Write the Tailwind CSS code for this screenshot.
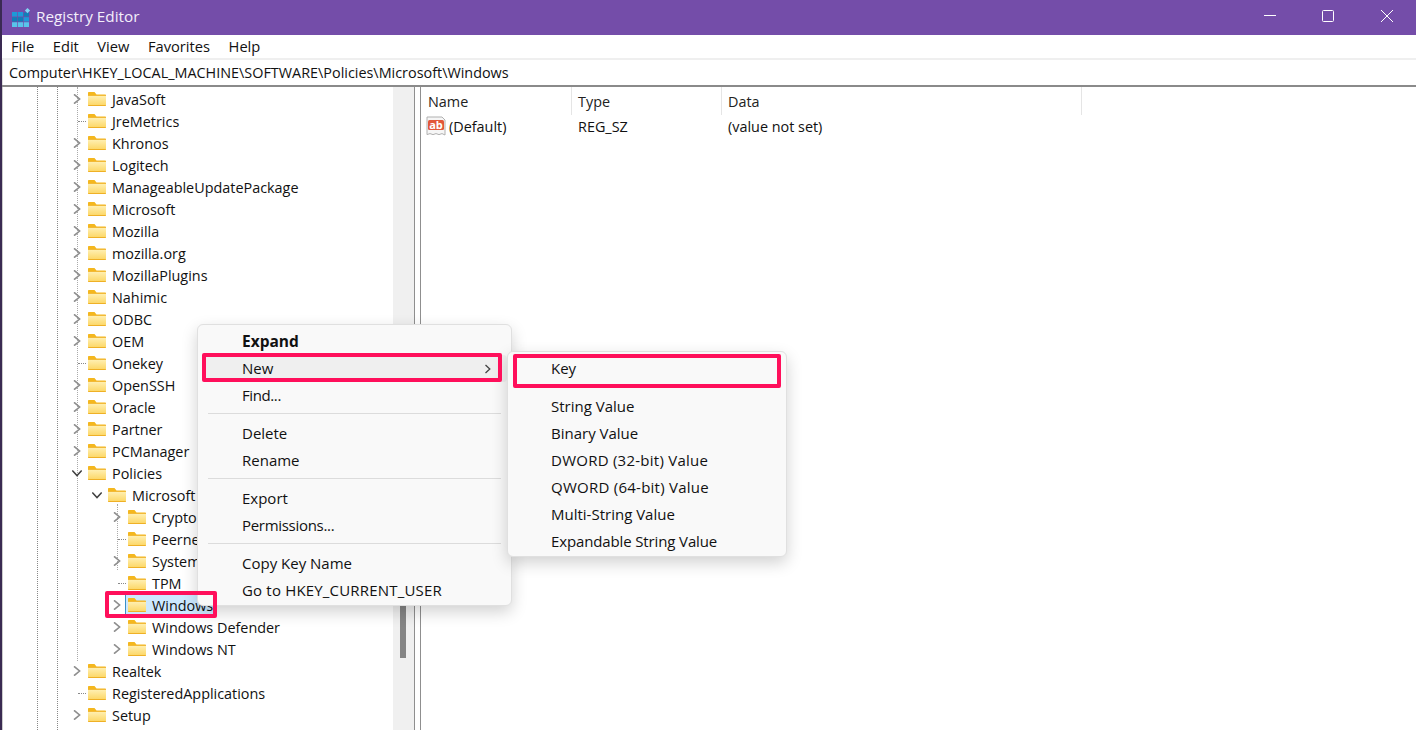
<!DOCTYPE html>
<html lang="en">
<head>
    <meta charset="UTF-8">
    <title>Registry Editor</title>
    <script src="https://cdn.jsdelivr.net/npm/@tailwindcss/browser@4"></script>
</head>
<body class="w-[1416px] h-[730px] overflow-hidden bg-white text-[#111] text-[14.4px] font-['Open_Sans','Noto_Sans',sans-serif]">
    <svg class="absolute w-0 h-0">
        <defs>
            <linearGradient id="fold" x1="0" y1="0" x2="0" y2="1">
                <stop offset="0" stop-color="#fff0b4"/>
                <stop offset="1" stop-color="#fcd662"/>
            </linearGradient>
        </defs>
        <symbol id="folder" viewBox="0 0 18 14">
            <path d="M0 1C0 .4.4 0 1 0h5.5l2 2.5H17c.6 0 1 .4 1 1V4H0z" fill="#f4b71e"/>
            <path d="M0 3.5h18V13c0 .6-.4 1-1 1H1c-.6 0-1-.4-1-1z" fill="url(#fold)"/>
            <path d="M0 3.2h18v.8H0zM0 13h18v.2c0 .5-.4.8-1 .8H1c-.6 0-1-.3-1-.8z" fill="#efb026"/>
        </symbol>
        <symbol id="right" viewBox="0 0 10 10"><path d="M2 .3L7.6 5 2 9.7" fill="none" stroke="#8e8e8e" stroke-width="1.6"/></symbol>
        <symbol id="down" viewBox="0 0 10 10"><path d="M.3 2.5L5 7.6l4.7-5.1" fill="none" stroke="#404040" stroke-width="1.5"/></symbol>
        <symbol id="more" viewBox="0 0 10 10"><path d="M2.5 1L6.8 5 2.5 9" fill="none" stroke="#444" stroke-width="1.3"/></symbol>
    </svg>

    <div class="relative flex flex-col h-full border-l-2 border-l-[#3a2a52]">
        <!-- Title bar -->
        <header class="h-[35px] shrink-0 flex items-center bg-[#744da9] text-[#f3eefa] pl-[9px] pr-[6px]">
            <svg class="w-[20px] h-[20px] shrink-0" viewBox="0 0 20 20">
                <path d="M1 4h5v4.5H1zM6.7 4H12v4.5H6.7z" fill="#1c9ad8"/>
                <path d="M1 9.2h5v4.3H1zM6.7 9.2H12v4.3H6.7zM12.7 4.5H18v4H12.7z" fill="#0f7fb8"/>
                <path d="M12.7 9.2H18v4.3h-5.3z" fill="#1c9ad8"/>
                <path d="M1 14.2h5V19H1zM6.7 14.2H12V19H6.7zM12.7 14.2H18V19h-5.3z" fill="#58c4ea"/>
                <path d="M16.5 0l2.6 2.6-2.6 2.6-2.6-2.6z" fill="#7fd4f2"/>
            </svg>
            <span class="ml-[5px] -mt-[2px] text-[15.3px]">Registry Editor</span>
            <div class="ml-auto flex items-center mb-[3px]">
                <svg class="w-[46px] h-[16px] mr-[12px]" viewBox="0 0 46 16"><path d="M17 7.5h12" stroke="#fff" stroke-width="1"/></svg>
                <svg class="w-[46px] h-[16px] mr-[13px]" viewBox="0 0 46 16"><rect x="17.5" y="2.5" width="11" height="11" rx="1" fill="none" stroke="#fff"/></svg>
                <svg class="w-[46px] h-[16px]" viewBox="0 0 46 16"><path d="M17 2l12 12M29 2L17 14" stroke="#fff" fill="none"/></svg>
            </div>
        </header>

        <!-- Menu bar -->
        <nav class="h-[23px] shrink-0 flex items-center gap-[18.5px] pl-[9px] text-[14.7px]">
            <span>File</span><span>Edit</span><span>View</span><span>Favorites</span><span>Help</span>
        </nav>
        <div class="h-[2px] shrink-0 bg-[#efefef]"></div>

        <!-- Address bar -->
        <div class="h-[25px] shrink-0 flex items-center pl-[6px] border-l border-l-[#ddd]">Computer\HKEY_LOCAL_MACHINE\SOFTWARE\Policies\Microsoft\Windows</div>
        <div class="h-[2px] shrink-0 bg-[#8a8a8a]"></div>

        <div class="flex flex-1 min-h-0">
            <!-- Tree -->
            <div class="relative w-[391px] shrink-0 overflow-hidden border-l border-l-[#ccc]">
                <div class="absolute left-[34px] top-0 bottom-0 border-l border-dotted border-[#888]"></div>
                <div class="absolute left-[54px] top-0 bottom-0 border-l border-dotted border-[#888]"></div>
                <div class="absolute left-[74px] top-0 h-[574px] border-l border-dotted border-[#aaa]"></div>
                <div class="absolute left-[114px] top-[417px] h-[66px] border-l border-dotted border-[#aaa]"></div>
                <div class="pt-px relative [&_span]:pt-[2px]">
                    <div class="flex items-center h-[22px] pl-[85px]"><svg class="absolute left-[69px] w-[10px] h-[10px]"><use href="#right"/></svg><svg class="w-[18px] h-[14px]"><use href="#folder"/></svg><span class="ml-[6px]">JavaSoft</span></div>
                    <div class="flex items-center h-[22px] pl-[85px]"><div class="absolute left-[75px] w-[8px] border-t border-dotted border-[#888]"></div><svg class="w-[18px] h-[14px]"><use href="#folder"/></svg><span class="ml-[6px]">JreMetrics</span></div>
                    <div class="flex items-center h-[22px] pl-[85px]"><svg class="absolute left-[69px] w-[10px] h-[10px]"><use href="#right"/></svg><svg class="w-[18px] h-[14px]"><use href="#folder"/></svg><span class="ml-[6px]">Khronos</span></div>
                    <div class="flex items-center h-[22px] pl-[85px]"><svg class="absolute left-[69px] w-[10px] h-[10px]"><use href="#right"/></svg><svg class="w-[18px] h-[14px]"><use href="#folder"/></svg><span class="ml-[6px]">Logitech</span></div>
                    <div class="flex items-center h-[22px] pl-[85px]"><svg class="absolute left-[69px] w-[10px] h-[10px]"><use href="#right"/></svg><svg class="w-[18px] h-[14px]"><use href="#folder"/></svg><span class="ml-[6px]">ManageableUpdatePackage</span></div>
                    <div class="flex items-center h-[22px] pl-[85px]"><svg class="absolute left-[69px] w-[10px] h-[10px]"><use href="#right"/></svg><svg class="w-[18px] h-[14px]"><use href="#folder"/></svg><span class="ml-[6px]">Microsoft</span></div>
                    <div class="flex items-center h-[22px] pl-[85px]"><svg class="absolute left-[69px] w-[10px] h-[10px]"><use href="#right"/></svg><svg class="w-[18px] h-[14px]"><use href="#folder"/></svg><span class="ml-[6px]">Mozilla</span></div>
                    <div class="flex items-center h-[22px] pl-[85px]"><svg class="absolute left-[69px] w-[10px] h-[10px]"><use href="#right"/></svg><svg class="w-[18px] h-[14px]"><use href="#folder"/></svg><span class="ml-[6px]">mozilla.org</span></div>
                    <div class="flex items-center h-[22px] pl-[85px]"><svg class="absolute left-[69px] w-[10px] h-[10px]"><use href="#right"/></svg><svg class="w-[18px] h-[14px]"><use href="#folder"/></svg><span class="ml-[6px]">MozillaPlugins</span></div>
                    <div class="flex items-center h-[22px] pl-[85px]"><svg class="absolute left-[69px] w-[10px] h-[10px]"><use href="#right"/></svg><svg class="w-[18px] h-[14px]"><use href="#folder"/></svg><span class="ml-[6px]">Nahimic</span></div>
                    <div class="flex items-center h-[22px] pl-[85px]"><svg class="absolute left-[69px] w-[10px] h-[10px]"><use href="#right"/></svg><svg class="w-[18px] h-[14px]"><use href="#folder"/></svg><span class="ml-[6px]">ODBC</span></div>
                    <div class="flex items-center h-[22px] pl-[85px]"><svg class="absolute left-[69px] w-[10px] h-[10px]"><use href="#right"/></svg><svg class="w-[18px] h-[14px]"><use href="#folder"/></svg><span class="ml-[6px]">OEM</span></div>
                    <div class="flex items-center h-[22px] pl-[85px]"><div class="absolute left-[75px] w-[8px] border-t border-dotted border-[#888]"></div><svg class="w-[18px] h-[14px]"><use href="#folder"/></svg><span class="ml-[6px]">Onekey</span></div>
                    <div class="flex items-center h-[22px] pl-[85px]"><svg class="absolute left-[69px] w-[10px] h-[10px]"><use href="#right"/></svg><svg class="w-[18px] h-[14px]"><use href="#folder"/></svg><span class="ml-[6px]">OpenSSH</span></div>
                    <div class="flex items-center h-[22px] pl-[85px]"><svg class="absolute left-[69px] w-[10px] h-[10px]"><use href="#right"/></svg><svg class="w-[18px] h-[14px]"><use href="#folder"/></svg><span class="ml-[6px]">Oracle</span></div>
                    <div class="flex items-center h-[22px] pl-[85px]"><svg class="absolute left-[69px] w-[10px] h-[10px]"><use href="#right"/></svg><svg class="w-[18px] h-[14px]"><use href="#folder"/></svg><span class="ml-[6px]">Partner</span></div>
                    <div class="flex items-center h-[22px] pl-[85px]"><svg class="absolute left-[69px] w-[10px] h-[10px]"><use href="#right"/></svg><svg class="w-[18px] h-[14px]"><use href="#folder"/></svg><span class="ml-[6px]">PCManager</span></div>
                    <div class="flex items-center h-[22px] pl-[85px]"><svg class="absolute left-[69px] w-[10px] h-[10px]"><use href="#down"/></svg><svg class="w-[18px] h-[14px]"><use href="#folder"/></svg><span class="ml-[6px]">Policies</span></div>
                    <div class="flex items-center h-[22px] pl-[105px]"><svg class="absolute left-[89px] w-[10px] h-[10px]"><use href="#down"/></svg><svg class="w-[18px] h-[14px]"><use href="#folder"/></svg><span class="ml-[6px]">Microsoft</span></div>
                    <div class="flex items-center h-[22px] pl-[125px]"><svg class="absolute left-[109px] w-[10px] h-[10px]"><use href="#right"/></svg><svg class="w-[18px] h-[14px]"><use href="#folder"/></svg><span class="ml-[6px]">Crypto</span></div>
                    <div class="flex items-center h-[22px] pl-[125px]"><div class="absolute left-[115px] w-[8px] border-t border-dotted border-[#888]"></div><svg class="w-[18px] h-[14px]"><use href="#folder"/></svg><span class="ml-[6px]">Peerne</span></div>
                    <div class="flex items-center h-[22px] pl-[125px]"><svg class="absolute left-[109px] w-[10px] h-[10px]"><use href="#right"/></svg><svg class="w-[18px] h-[14px]"><use href="#folder"/></svg><span class="ml-[6px]">System</span></div>
                    <div class="flex items-center h-[22px] pl-[125px]"><div class="absolute left-[115px] w-[8px] border-t border-dotted border-[#888]"></div><svg class="w-[18px] h-[14px]"><use href="#folder"/></svg><span class="ml-[6px]">TPM</span></div>
                    <div class="flex items-center h-[22px] pl-[125px]"><svg class="absolute left-[109px] w-[10px] h-[10px]"><use href="#right"/></svg><div class="absolute left-[122px] w-[90px] h-[22px] bg-[#cce8ff] border-l border-l-[#3a8fc7]"></div><svg class="relative w-[18px] h-[14px]"><use href="#folder"/></svg><span class="relative ml-[6px]">Windows</span></div>
                    <div class="flex items-center h-[22px] pl-[125px]"><svg class="absolute left-[109px] w-[10px] h-[10px]"><use href="#right"/></svg><svg class="w-[18px] h-[14px]"><use href="#folder"/></svg><span class="ml-[6px]">Windows Defender</span></div>
                    <div class="flex items-center h-[22px] pl-[125px]"><svg class="absolute left-[109px] w-[10px] h-[10px]"><use href="#right"/></svg><svg class="w-[18px] h-[14px]"><use href="#folder"/></svg><span class="ml-[6px]">Windows NT</span></div>
                    <div class="flex items-center h-[22px] pl-[85px]"><svg class="absolute left-[69px] w-[10px] h-[10px]"><use href="#right"/></svg><svg class="w-[18px] h-[14px]"><use href="#folder"/></svg><span class="ml-[6px]">Realtek</span></div>
                    <div class="flex items-center h-[22px] pl-[85px]"><div class="absolute left-[75px] w-[8px] border-t border-dotted border-[#888]"></div><svg class="w-[18px] h-[14px]"><use href="#folder"/></svg><span class="ml-[6px]">RegisteredApplications</span></div>
                    <div class="flex items-center h-[22px] pl-[85px]"><svg class="absolute left-[69px] w-[10px] h-[10px]"><use href="#right"/></svg><svg class="w-[18px] h-[14px]"><use href="#folder"/></svg><span class="ml-[6px]">Setup</span></div>
                </div>
            </div>

            <!-- Tree scrollbar and splitter -->
            <div class="relative w-[21px] shrink-0 bg-[#f0f0f0]">
                <div class="absolute left-[7px] top-[300px] w-[6px] h-[271px] bg-[#858585]"></div>
            </div>
            <div class="w-[7px] shrink-0 border-x border-x-[#8f8f8f]"></div>

            <!-- Values list -->
            <div class="flex-1 min-w-0">
                <div class="flex h-[28px] items-center text-[#222]">
                    <div class="w-[151px] h-[28px] flex items-center pl-[7px] pt-[2px] border-r border-r-[#e5e5e5]">Name</div>
                    <div class="w-[150px] h-[28px] flex items-center pl-[6px] pt-[2px] border-r border-r-[#e5e5e5]">Type</div>
                    <div class="w-[360px] h-[28px] flex items-center pl-[6px] pt-[2px] border-r border-r-[#e5e5e5]">Data</div>
                </div>
                <div class="flex h-[22px] items-center">
                    <div class="w-[151px] flex items-center pl-[5px]">
                        <svg class="w-[20px] h-[20px] shrink-0" viewBox="0 0 20 20">
                            <path d="M1 1h15l3 3v15l-3-1.4-3 1-3-1-3 1-3-1-3 1z" fill="#f6f6f6" stroke="#b0b0b0"/>
                            <rect x="2" y="4" width="16" height="10" rx="1.5" fill="#e2573a"/>
                            <text x="10" y="12.5" text-anchor="middle" font-size="11" font-weight="700" fill="#fff">ab</text>
                        </svg>
                        <span class="ml-[3px] pt-[2px]">(Default)</span>
                    </div>
                    <div class="w-[150px] pl-[6px] pt-[2px]">REG_SZ</div>
                    <div class="pl-[6px] pt-[2px]">(value not set)</div>
                </div>
            </div>
        </div>

        <!-- Context menu -->
        <div class="absolute left-[195px] top-[324px] w-[315px] h-[282px] bg-[#f9f9f9] border border-[#e0e0e0] rounded-[6px] shadow-[0_6px_16px_rgba(0,0,0,0.18)] pt-[3px] px-[4px] text-[15px]">
            <div class="h-[27px] flex items-center pl-[40px] font-bold text-[15.5px]">Expand</div>
            <div class="h-[27px] flex items-center pl-[40px] pr-[14px] justify-between bg-[#efefef] rounded-[4px]">New<svg class="w-[10px] h-[10px]"><use href="#more"/></svg></div>
            <div class="h-[27px] flex items-center pl-[40px] tracking-[-0.4px]">Find...</div>
            <div class="h-px bg-[#dcdcdc] mx-[6px] mt-[4px] mb-[6px]"></div>
            <div class="h-[27px] flex items-center pl-[40px]">Delete</div>
            <div class="h-[27px] flex items-center pl-[40px]">Rename</div>
            <div class="h-px bg-[#dcdcdc] mx-[6px] mt-[4px] mb-[6px]"></div>
            <div class="h-[27px] flex items-center pl-[40px]">Export</div>
            <div class="h-[27px] flex items-center pl-[40px] tracking-[-0.3px]">Permissions...</div>
            <div class="h-px bg-[#dcdcdc] mx-[6px] mt-[4px] mb-[6px]"></div>
            <div class="h-[27px] flex items-center pl-[40px]">Copy Key Name</div>
            <div class="h-[27px] flex items-center pl-[40px] tracking-[0.18px]">Go to HKEY_CURRENT_USER</div>
        </div>

        <!-- New submenu -->
        <div class="absolute left-[505px] top-[351px] w-[280px] h-[206px] bg-[#f9f9f9] border border-[#e0e0e0] rounded-[6px] shadow-[0_6px_16px_rgba(0,0,0,0.18)] pt-[3px] px-[4px] text-[15px]">
            <div class="h-[27px] flex items-center pl-[39px]">Key</div>
            <div class="h-px bg-[#dcdcdc] mx-[6px] mt-[4px] mb-[6px]"></div>
            <div class="h-[27px] flex items-center pl-[39px]">String Value</div>
            <div class="h-[27px] flex items-center pl-[39px]">Binary Value</div>
            <div class="h-[27px] flex items-center pl-[39px] tracking-[0.25px]">DWORD (32-bit) Value</div>
            <div class="h-[27px] flex items-center pl-[39px] tracking-[0.25px]">QWORD (64-bit) Value</div>
            <div class="h-[27px] flex items-center pl-[39px]">Multi-String Value</div>
            <div class="h-[27px] flex items-center pl-[39px] tracking-[-0.13px]">Expandable String Value</div>
        </div>

        <!-- Red callouts drawn over the screenshot -->
        <div class="absolute left-[200px] top-[353px] w-[300px] h-[29px] border-[4px] border-[#ff0f5b] rounded-[2px]"></div>
        <div class="absolute left-[511px] top-[354px] w-[268px] h-[34px] border-[4px] border-[#ff0f5b] rounded-[2px]"></div>
        <div class="absolute left-[103px] top-[591px] w-[112px] h-[27px] border-[4px] border-[#ff0f5b] rounded-[2px]"></div>
    </div>
</body>
</html>
